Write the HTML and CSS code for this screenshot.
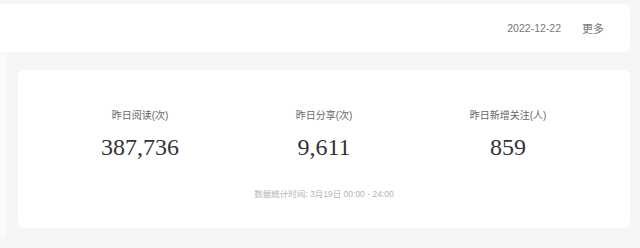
FILE: index.html
```html
<!DOCTYPE html>
<html lang="zh-CN">
<head>
    <meta charset="UTF-8">
    <meta name="viewport" content="width=device-width, initial-scale=1.0">
    <title>数据概况</title>
    <link rel="stylesheet" href="styles.css">
</head>
<body>
    <div class="topbar">
        <span class="date">2022-12-22</span>
        <a class="more" href="#">更多</a>
    </div>

    <div class="main">
        <div class="side"></div>
        <div class="content">
            <div class="card">
                <div class="stats">
                    <div class="stat">
                        <h4>昨日阅读(次)</h4>
                        <p>387,736</p>
                    </div>
                    <div class="stat">
                        <h4>昨日分享(次)</h4>
                        <p>9,611</p>
                    </div>
                    <div class="stat">
                        <h4>昨日新增关注(人)</h4>
                        <p>859</p>
                    </div>
                </div>
                <div class="note">数据统计时间: 3月19日 00:00 - 24:00</div>
            </div>
        </div>
    </div>
</body>
</html>
```

FILE: styles.css
```css
body {
    margin: 0;
    padding: 4px 10px 0 0;
    background-color: #f5f6f8;
    font-family: "Liberation Sans", "Noto Sans CJK SC", sans-serif;
    overflow: hidden;
}
.topbar {
    height: 48px;
    background-color: white;
    border-radius: 0 6px 6px 0;
    display: flex;
    align-items: center;
    justify-content: flex-end;
    padding-right: 26px;
    font-size: 10.5px;
    color: #777;
}
.topbar .more {
    margin-left: 21px;
    font-size: 11px;
    color: #777;
    text-decoration: none;
}
.main {
    display: flex;
}
.side {
    width: 6px;
    height: 186px;
    background-color: #f9fafb;
}
.content {
    flex: 1;
    padding: 18px 0 0 12px;
}
.card {
    height: 158px;
    box-sizing: border-box;
    background-color: white;
    border-radius: 6px;
    padding: 38px 30px 0;
}
.stats {
    display: grid;
    grid-template-columns: repeat(3, 1fr);
}
.stat {
    text-align: center;
}
.stat h4 {
    margin: 0;
    font-size: 10px;
    line-height: 16px;
    font-weight: normal;
    color: #666;
}
.stat p {
    margin: 8px 0 0;
    font-family: "Liberation Serif", serif;
    font-size: 24px;
    line-height: 30px;
    color: #333;
}
.note {
    margin-top: 25px;
    text-align: center;
    font-size: 8.5px;
    line-height: 14px;
    color: #b3b3b3;
}
```
